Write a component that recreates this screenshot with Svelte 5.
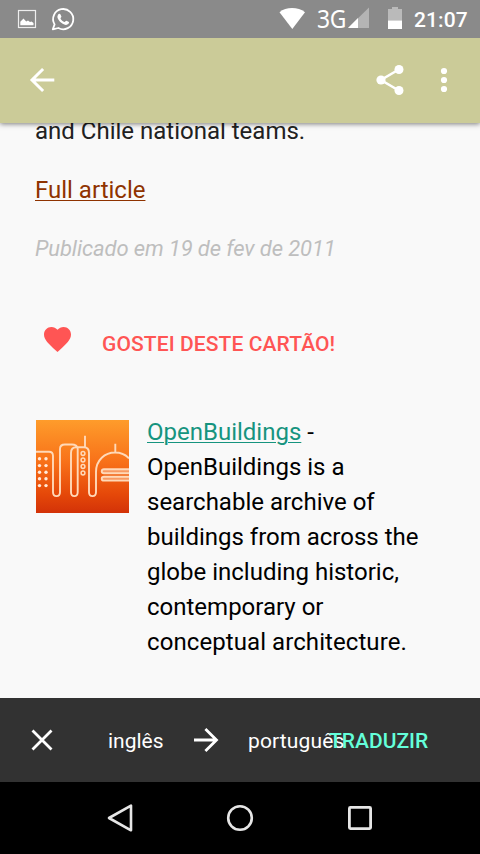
<script>
  const windows = [38.8, 45.6, 52.3, 58.8, 65.6];
  const portholes = [33.5, 40, 46.5, 53];
</script>

<div class="screen">
  <div class="status">
    <svg class="notif" width="80" height="38" viewBox="0 0 80 38">
      <rect x="18.5" y="10.5" width="17" height="17" fill="none" stroke="#eee" stroke-width="1.2" />
      <path d="M20.3 25.2V21.8L23.5 18.6L26.2 21.5L28 20.4L30 22L31.5 21.4L33.5 23V25.2Z" fill="#fff" />
      <path d="M52.8 29.4L54.6 24.4A10.1 10.1 0 1 1 58.4 28Z" fill="none" stroke="#fff" stroke-width="1.8" stroke-linejoin="round" />
      <path d="M58 14.8C58.6 13.6 60 13.5 60.5 14.4L61.4 16.5C61.6 17.3 60.4 17.9 60.5 18.4C61.3 20 62.9 21.5 64.5 22C65.2 22.1 65.8 20.7 66.5 20.8L69 22.1C69.4 23.4 67.6 25 65.9 24.9C61.7 24.6 57.2 19.4 57.4 16.5Z" fill="#fff" />
    </svg>
    <svg class="wifi" width="28" height="38" viewBox="0 0 28 38"><path d="M1.5 12.2C8 6.6 20 6.6 27 12.2L14.3 29Z" fill="#fff" /></svg>
    <span class="net">3G</span>
    <svg class="signal" width="58" height="38" viewBox="0 0 58 38">
      <path d="M1 28L22 7.5V28Z" fill="#b4b4b4" /><path d="M1 28L11 18V28Z" fill="#fff" />
      <path d="M41 9H45V7H51V9H55V21H41Z" fill="#bababa" /><path d="M41 20.6H55V29H41Z" fill="#fff" />
    </svg>
    <span class="clock">21:07</span>
  </div>

  <header>
    <svg class="back" width="28" height="28" viewBox="0 0 28 28" fill="none" stroke="#fff" stroke-width="3"><path d="M26.3 14H4M15.1 3L4 14L15.1 25" /></svg>
    <svg class="share" width="30" height="32" viewBox="0 0 30 32" fill="#fff">
      <path d="M23.8 5.5L6 16L23.8 26.5" fill="none" stroke="#fff" stroke-width="2.6" />
      <circle cx="6" cy="16" r="4.6" /><circle cx="24" cy="5.5" r="4.5" /><circle cx="24" cy="26.5" r="4.5" />
    </svg>
    <svg class="more" width="8" height="28" viewBox="0 0 8 28" fill="#fff"><circle cx="4" cy="5" r="3.1" /><circle cx="4" cy="14" r="3.1" /><circle cx="4" cy="23" r="3.1" /></svg>
  </header>

  <main>
    <p class="teams">and Chile national teams.</p>
    <p class="full"><a href="#article">Full article</a></p>
    <p class="date">Publicado em 19 de fev de 2011</p>
    <div class="like">
      <svg width="27" height="25" viewBox="2 3 20 18.35" preserveAspectRatio="none"><path fill="#ff5554" d="M12 21.35l-1.45-1.32C5.4 15.36 2 12.28 2 8.5 2 5.42 4.42 3 7.5 3c1.74 0 3.41.81 4.5 2.09C13.09 3.81 14.76 3 16.5 3 19.58 3 22 5.42 22 8.5c0 3.78-3.4 6.86-8.55 11.54L12 21.35z" /></svg>
      <span>GOSTEI DESTE CARTÃO!</span>
    </div>
    <div class="card">
      <svg class="logo" width="93" height="93" viewBox="0 0 93 93">
        <defs><linearGradient id="sunset" x1="0" y1="0" x2="0" y2="1"><stop offset="0" stop-color="#fe9c2b" /><stop offset=".45" stop-color="#f87119" /><stop offset=".8" stop-color="#e54809" /><stop offset="1" stop-color="#d33208" /></linearGradient></defs>
        <rect width="93" height="93" fill="url(#sunset)" />
        <g fill="none" stroke="#ffd9b8" stroke-width="1.9">
          <path d="M0 31.8H13C16 31.8 17 33 17 36V72C17 77.5 24 77.5 24 72V29C24 26 26 24.5 29 24.5H36C39 24.5 41.7 26 41.7 29V72C41.7 77.5 35 77.5 35 72V33C35 29.5 37 27.3 40 27.3H48C51 27.3 53 29.5 53 33V72C53 77.5 60 77.5 60 72V52C60 40 69 32.5 79 32.5C85 32.5 90 35 93 38.5M49 27V15.8M79.3 32V23.8" />
          <path d="M93 49.2H68C65 49.2 65 53.2 68 53.2H93M93 56.8H68C65 56.8 65 60.6 68 60.6H93" fill="#f89a63" />
          {#each portholes as y}<circle cx="47" cy={y} r="1.9" stroke-width="1.5" />{/each}
        </g>
        {#each windows as y}<circle cx="3.5" cy={y} r="1.7" fill="#ffead9" /><circle cx="10" cy={y} r="1.7" fill="#ffead9" />{/each}
      </svg>
      <div class="copy">
        <div><a href="#openbuildings">OpenBuildings</a> -</div>
        <div>OpenBuildings is a</div>
        <div>searchable archive of</div>
        <div>buildings from across the</div>
        <div>globe including historic,</div>
        <div>contemporary or</div>
        <div class="last">conceptual architecture.</div>
      </div>
    </div>
  </main>

  <div class="translate">
    <svg class="close" width="24" height="24" viewBox="0 0 24 24" fill="none" stroke="#fff" stroke-width="2.8"><path d="M2.5 2.5L21.5 21.5M21.5 2.5L2.5 21.5" /></svg>
    <span class="from">inglês</span>
    <svg class="to-arrow" width="28" height="28" viewBox="0 0 28 28" fill="none" stroke="#fff" stroke-width="2.8"><path d="M2 14H24.5M13.4 3L24.5 14L13.4 25" /></svg>
    <span class="to">português</span>
    <span class="action">TRADUZIR</span>
  </div>

  <nav>
    <svg width="28" height="30" viewBox="0 0 28 30"><path d="M3 15L25 2.7V27.3Z" fill="none" stroke="#e6e6e6" stroke-width="2.6" stroke-linejoin="round" /></svg>
    <svg width="28" height="30" viewBox="0 0 28 30"><circle cx="14" cy="15" r="11.8" fill="none" stroke="#e6e6e6" stroke-width="2.6" /></svg>
    <svg width="28" height="30" viewBox="0 0 28 30"><rect x="3.4" y="4.4" width="21.2" height="21.2" rx="1" fill="none" stroke="#e6e6e6" stroke-width="2.8" /></svg>
  </nav>
</div>

<style>
  :global(body) { margin: 0; }
  .screen { width: 480px; height: 854px; overflow: hidden; display: flex; flex-direction: column; background: #f9f9f9; font-family: Roboto, sans-serif; }
  svg { display: block; flex: none; }
  span { white-space: nowrap; }
  .status { height: 38px; flex: none; display: flex; background: #8a8a8a; color: #fff; line-height: 38px; position: relative; z-index: 2; }
  .wifi { margin-left: 198px; }
  .net { margin-left: 11px; width: 31px; font-family: "Noto Sans", sans-serif; font-size: 26px; letter-spacing: -.5px; line-height: 36px; transform: scaleX(.88); transform-origin: 0 0; }
  .signal { margin-left: -1px; }
  .clock { margin-left: 9px; font-size: 21px; font-weight: 500; line-height: 40px; letter-spacing: .1px; }
  header { height: 85px; flex: none; box-sizing: border-box; padding-bottom: 1px; display: flex; align-items: center; background: #cbcb98; position: relative; z-index: 1; box-shadow: 0 1px 5px rgba(0, 0, 0, .5); }
  .back { margin-left: 28px; }
  .share { margin-left: 319px; }
  .more { margin-left: 35px; }
  main { flex: 1; min-height: 0; margin-top: -9px; padding: 0 35px; font-size: 24px; line-height: 35px; color: #212121; }
  p { margin: 0 0 24px; white-space: nowrap; }
  .full a { color: #8f3300; }
  a { text-decoration-thickness: 1px; text-underline-offset: 2px; }
  .date { margin: -1px 0 0; font-size: 22px; font-style: italic; color: #bebebe; letter-spacing: -.12px; }
  .like { height: 36px; margin-top: 61px; display: flex; color: #ff5554; font-size: 21px; font-weight: 500; letter-spacing: .1px; }
  .like svg { margin: 0 0 0 8.5px; }
  .like span { margin-left: 31.5px; }
  .card { margin: 52px 0 0 1px; display: flex; color: #000; }
  .logo { margin-top: 5px; }
  .copy { margin-left: 18px; white-space: nowrap; }
  .copy a { color: #16947f; }
  .last { letter-spacing: .08px; }
  .translate { height: 84px; flex: none; display: flex; align-items: center; background: #323232; color: #fff; font-size: 21px; }
  .translate span { padding-top: 2px; }
  .close { margin-left: 30px; }
  .from { margin-left: 54px; width: 56px; }
  .to-arrow { margin-left: 28px; }
  .to { margin-left: 28px; width: 81px; letter-spacing: .15px; }
  .action { color: #64ffda; font-weight: 500; }
  nav { height: 72px; flex: none; display: flex; align-items: center; justify-content: center; gap: 92px; background: #000; }
</style>
